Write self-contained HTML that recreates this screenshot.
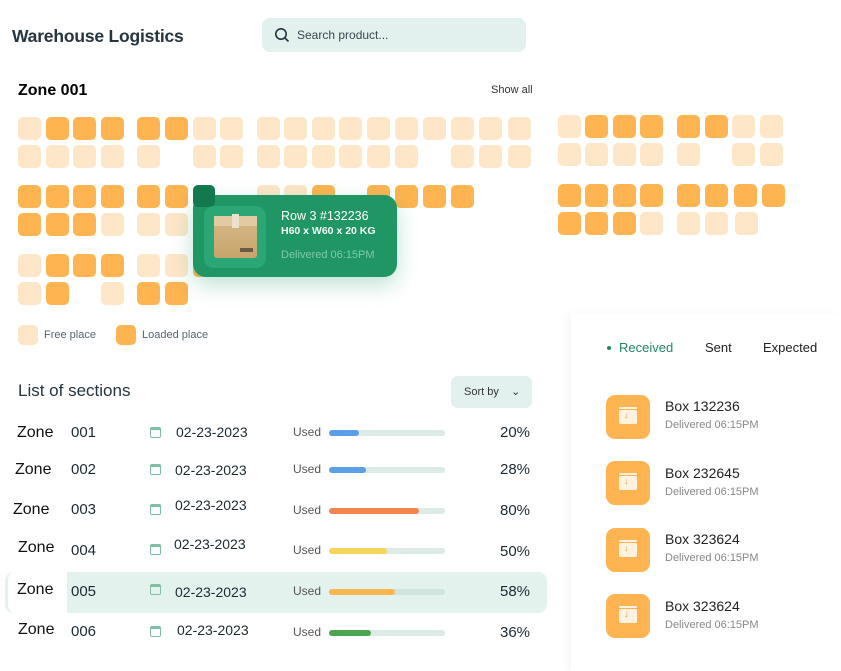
<!DOCTYPE html>
<html><head><meta charset="utf-8"><style>
*{margin:0;padding:0;box-sizing:border-box}
body{width:841px;height:671px;background:#fff;position:relative;overflow:hidden;font-family:"Liberation Sans",sans-serif;color:#1e2a32}
.a{position:absolute}
.c{position:absolute;width:23px;height:23px;border-radius:5px}
.L{background:#fee6c8}.D{background:#fdb451}
.t{position:absolute;white-space:nowrap}
.bar{position:absolute;left:329px;width:116px;height:6px;border-radius:3px;background:#dcebe6}
.bar i{position:absolute;left:0;top:0;height:6px;border-radius:3px}
.ic{position:absolute;left:606px;width:44px;height:44px;border-radius:9px;background:#fdb451}
.ic b{position:absolute;left:13px;top:15px;width:18px;height:14px;border-radius:2px;background:#fff3df}
.ic b:before{content:"";position:absolute;left:0;top:-3px;width:18px;height:2px;background:#fff3df;border-radius:1px}
.ic b:after{content:"↓";position:absolute;left:5px;top:0;font-size:9px;color:#e0a050}
.cal{position:absolute;left:150px;width:11px;height:11px;border:1.5px solid #7fbfa3;border-top-width:3px;border-radius:2px}
</style></head><body>
<div class="t" style="left:12px;top:26px;font-size:17.5px;font-weight:bold;color:#263540;letter-spacing:-0.2px">Warehouse Logistics</div>
<div class="a" style="left:262px;top:18px;width:264px;height:34px;border-radius:8px;background:#e3f1ee"></div>
<svg class="a" style="left:274px;top:27px" width="16" height="16" viewBox="0 0 16 16"><circle cx="7" cy="7" r="5.2" fill="none" stroke="#263540" stroke-width="1.6"/><path d="M11 11l3.5 3.5" stroke="#263540" stroke-width="1.6"/></svg>
<div class="t" style="left:297px;top:28px;font-size:12px;color:#3a4750">Search product...</div>
<div class="t" style="left:18px;top:82px;font-size:16px;font-weight:bold;color:#000">Zone 001</div>
<div class="t" style="left:491px;top:84px;font-size:11px;color:#333">Show all</div>

<div class="c L" style="left:18px;top:117px"></div><div class="c D" style="left:46px;top:117px"></div><div class="c D" style="left:73px;top:117px"></div><div class="c D" style="left:101px;top:117px"></div>
<div class="c D" style="left:137px;top:117px"></div><div class="c D" style="left:165px;top:117px"></div><div class="c L" style="left:193px;top:117px"></div><div class="c L" style="left:220px;top:117px"></div>
<div class="c L" style="left:257px;top:117px"></div><div class="c L" style="left:284px;top:117px"></div><div class="c L" style="left:312px;top:117px"></div><div class="c L" style="left:339px;top:117px"></div><div class="c L" style="left:367px;top:117px"></div><div class="c L" style="left:395px;top:117px"></div><div class="c L" style="left:423px;top:117px"></div><div class="c L" style="left:451px;top:117px"></div><div class="c L" style="left:479px;top:117px"></div><div class="c L" style="left:508px;top:117px"></div>
<div class="c L" style="left:558px;top:115px"></div><div class="c D" style="left:585px;top:115px"></div><div class="c D" style="left:613px;top:115px"></div><div class="c D" style="left:640px;top:115px"></div><div class="c D" style="left:677px;top:115px"></div><div class="c D" style="left:705px;top:115px"></div><div class="c L" style="left:732px;top:115px"></div><div class="c L" style="left:760px;top:115px"></div>
<div class="c L" style="left:18px;top:145px"></div><div class="c L" style="left:46px;top:145px"></div><div class="c L" style="left:73px;top:145px"></div><div class="c L" style="left:101px;top:145px"></div>
<div class="c L" style="left:137px;top:145px"></div><div class="c L" style="left:193px;top:145px"></div><div class="c L" style="left:220px;top:145px"></div>
<div class="c L" style="left:257px;top:145px"></div><div class="c L" style="left:284px;top:145px"></div><div class="c L" style="left:312px;top:145px"></div><div class="c L" style="left:339px;top:145px"></div><div class="c L" style="left:367px;top:145px"></div><div class="c L" style="left:395px;top:145px"></div><div class="c L" style="left:451px;top:145px"></div><div class="c L" style="left:479px;top:145px"></div><div class="c L" style="left:508px;top:145px"></div>
<div class="c L" style="left:558px;top:143px"></div><div class="c L" style="left:585px;top:143px"></div><div class="c L" style="left:613px;top:143px"></div><div class="c L" style="left:640px;top:143px"></div><div class="c L" style="left:677px;top:143px"></div><div class="c L" style="left:732px;top:143px"></div><div class="c L" style="left:760px;top:143px"></div>
<div class="c D" style="left:18px;top:185px"></div><div class="c D" style="left:46px;top:185px"></div><div class="c D" style="left:73px;top:185px"></div><div class="c D" style="left:101px;top:185px"></div>
<div class="c D" style="left:137px;top:185px"></div><div class="c D" style="left:165px;top:185px"></div>
<div class="c L" style="left:257px;top:185px"></div><div class="c L" style="left:284px;top:185px"></div><div class="c D" style="left:312px;top:185px"></div><div class="c D" style="left:367px;top:185px"></div><div class="c D" style="left:395px;top:185px"></div><div class="c D" style="left:423px;top:185px"></div><div class="c D" style="left:451px;top:185px"></div>
<div class="c D" style="left:558px;top:184px"></div><div class="c D" style="left:585px;top:184px"></div><div class="c D" style="left:613px;top:184px"></div><div class="c D" style="left:640px;top:184px"></div><div class="c D" style="left:677px;top:184px"></div><div class="c D" style="left:705px;top:184px"></div><div class="c D" style="left:734px;top:184px"></div><div class="c D" style="left:762px;top:184px"></div>
<div class="c D" style="left:18px;top:213px"></div><div class="c D" style="left:46px;top:213px"></div><div class="c D" style="left:73px;top:213px"></div><div class="c L" style="left:101px;top:213px"></div>
<div class="c L" style="left:137px;top:213px"></div><div class="c L" style="left:165px;top:213px"></div>
<div class="c D" style="left:558px;top:212px"></div><div class="c D" style="left:585px;top:212px"></div><div class="c D" style="left:613px;top:212px"></div><div class="c L" style="left:640px;top:212px"></div><div class="c L" style="left:677px;top:212px"></div><div class="c L" style="left:705px;top:212px"></div><div class="c L" style="left:735px;top:212px"></div>
<div class="c L" style="left:18px;top:254px"></div><div class="c D" style="left:46px;top:254px"></div><div class="c D" style="left:73px;top:254px"></div><div class="c D" style="left:101px;top:254px"></div>
<div class="c L" style="left:137px;top:254px"></div><div class="c L" style="left:165px;top:254px"></div><div class="c D" style="left:193px;top:254px"></div>
<div class="c L" style="left:18px;top:282px"></div><div class="c D" style="left:46px;top:282px"></div><div class="c L" style="left:101px;top:282px"></div>
<div class="c D" style="left:137px;top:282px"></div><div class="c D" style="left:165px;top:282px"></div>

<div class="a" style="left:193px;top:195px;width:204px;height:82px;border-radius:13px;background:#1f9664;box-shadow:0 8px 22px rgba(40,160,110,.3)"></div>
<div class="a" style="left:193px;top:185px;width:22px;height:22px;border-radius:5px;background:#13784d"></div>
<div class="a" style="left:204px;top:206px;width:62px;height:62px;border-radius:10px;background:#2aa774"></div>
<div class="a" style="left:214px;top:216px;width:43px;height:42px;border-radius:3px;background:linear-gradient(#d6b988,#c8a46c)"></div>
<div class="a" style="left:214px;top:216px;width:43px;height:10px;background:#e2cba3"></div>
<div class="a" style="left:232px;top:214px;width:7px;height:14px;background:#ece1cc"></div>
<div class="a" style="left:240px;top:248px;width:13px;height:4px;background:#6a5a44"></div>
<div class="t" style="left:281px;top:209px;font-size:12.5px;color:#fff">Row 3 #132236</div>
<div class="t" style="left:281px;top:225px;font-size:10.5px;font-weight:bold;color:#f3fbf7">H60 x W60 x 20 KG</div>
<div class="t" style="left:281px;top:249px;font-size:11px;color:#7fcaa6">Delivered 06:15PM</div>

<div class="a" style="left:18px;top:325px;width:20px;height:20px;border-radius:5px;background:#fee6c8"></div>
<div class="t" style="left:44px;top:329px;font-size:11px;color:#5a6470">Free place</div>
<div class="a" style="left:116px;top:325px;width:20px;height:20px;border-radius:5px;background:#fdb451"></div>
<div class="t" style="left:142px;top:329px;font-size:11px;color:#5a6470">Loaded place</div>

<div class="t" style="left:18px;top:381px;font-size:17px;color:#263540">List of sections</div>
<div class="a" style="left:451px;top:376px;width:81px;height:32px;border-radius:7px;background:#e3f1ee"></div>
<div class="t" style="left:464px;top:385px;font-size:11px;color:#333">Sort by &nbsp;&nbsp;&nbsp;⌄</div>
<div class="a" style="left:5px;top:572px;width:542px;height:41px;border-radius:9px;background:#e4f2ee"></div>
<div class="a" style="left:5px;top:572px;width:62px;height:41px;background:#fff;border-radius:9px 0 0 9px;border-left:3px solid #e4f2ee"></div>

<div class="t" style="left:17px;top:424px;font-size:16px;color:#111">Zone</div><div class="t" style="left:71px;top:424px;font-size:15px">001</div><div class="cal" style="top:427px"></div><div class="t" style="left:176px;top:424px;font-size:14px">02-23-2023</div><div class="t" style="left:293px;top:425px;font-size:12px;color:#555">Used</div><div class="bar" style="top:430px"><i style="width:30px;background:#5d9ee8"></i></div><div class="t" style="left:500px;top:424px;font-size:15px">20%</div>
<div class="t" style="left:15px;top:461px;font-size:16px;color:#111">Zone</div><div class="t" style="left:71px;top:461px;font-size:15px">002</div><div class="cal" style="top:464px"></div><div class="t" style="left:175px;top:462px;font-size:14px">02-23-2023</div><div class="t" style="left:293px;top:462px;font-size:12px;color:#555">Used</div><div class="bar" style="top:467px"><i style="width:37px;background:#5d9ee8"></i></div><div class="t" style="left:500px;top:461px;font-size:15px">28%</div>
<div class="t" style="left:13px;top:501px;font-size:16px;color:#111">Zone</div><div class="t" style="left:71px;top:501px;font-size:15px">003</div><div class="cal" style="top:504px"></div><div class="t" style="left:175px;top:497px;font-size:14px">02-23-2023</div><div class="t" style="left:293px;top:503px;font-size:12px;color:#555">Used</div><div class="bar" style="top:508px"><i style="width:90px;background:#f08552"></i></div><div class="t" style="left:500px;top:502px;font-size:15px">80%</div>
<div class="t" style="left:18px;top:539px;font-size:16px;color:#111">Zone</div><div class="t" style="left:71px;top:542px;font-size:15px">004</div><div class="cal" style="top:544px"></div><div class="t" style="left:174px;top:536px;font-size:14px">02-23-2023</div><div class="t" style="left:293px;top:543px;font-size:12px;color:#555">Used</div><div class="bar" style="top:548px"><i style="width:58px;background:#f9d45c"></i></div><div class="t" style="left:500px;top:543px;font-size:15px">50%</div>
<div class="t" style="left:17px;top:581px;font-size:16px;color:#111">Zone</div><div class="t" style="left:71px;top:583px;font-size:15px">005</div><div class="cal" style="top:584px"></div><div class="t" style="left:175px;top:584px;font-size:14px">02-23-2023</div><div class="t" style="left:293px;top:584px;font-size:12px;color:#555">Used</div><div class="bar" style="top:589px;background:#cfe5dd"><i style="width:66px;background:#fdb451"></i></div><div class="t" style="left:500px;top:583px;font-size:15px">58%</div>
<div class="t" style="left:18px;top:621px;font-size:16px;color:#111">Zone</div><div class="t" style="left:71px;top:623px;font-size:15px">006</div><div class="cal" style="top:626px"></div><div class="t" style="left:177px;top:622px;font-size:14px">02-23-2023</div><div class="t" style="left:293px;top:625px;font-size:12px;color:#555">Used</div><div class="bar" style="top:630px"><i style="width:42px;background:#4fa451"></i></div><div class="t" style="left:500px;top:624px;font-size:15px">36%</div>

<div class="a" style="left:571px;top:314px;width:270px;height:357px;background:#fff;box-shadow:-4px 0 8px rgba(0,0,0,.04)"></div>
<div class="a" style="left:607px;top:346px;width:4px;height:4px;border-radius:50%;background:#1f8a5c"></div>
<div class="t" style="left:619px;top:340px;font-size:13px;color:#1f8a5c">Received</div>
<div class="t" style="left:705px;top:340px;font-size:13px;color:#222">Sent</div>
<div class="t" style="left:763px;top:340px;font-size:13px;color:#222">Expected</div>

<div class="ic" style="top:395px"><b></b></div><div class="t" style="left:665px;top:398px;font-size:14px;color:#222">Box 132236</div><div class="t" style="left:665px;top:419px;font-size:11px;color:#888">Delivered 06:15PM</div>
<div class="ic" style="top:461px"><b></b></div><div class="t" style="left:665px;top:465px;font-size:14px;color:#222">Box 232645</div><div class="t" style="left:665px;top:486px;font-size:11px;color:#888">Delivered 06:15PM</div>
<div class="ic" style="top:528px"><b></b></div><div class="t" style="left:665px;top:531px;font-size:14px;color:#222">Box 323624</div><div class="t" style="left:665px;top:552px;font-size:11px;color:#888">Delivered 06:15PM</div>
<div class="ic" style="top:594px"><b></b></div><div class="t" style="left:665px;top:598px;font-size:14px;color:#222">Box 323624</div><div class="t" style="left:665px;top:619px;font-size:11px;color:#888">Delivered 06:15PM</div>
</body></html>
